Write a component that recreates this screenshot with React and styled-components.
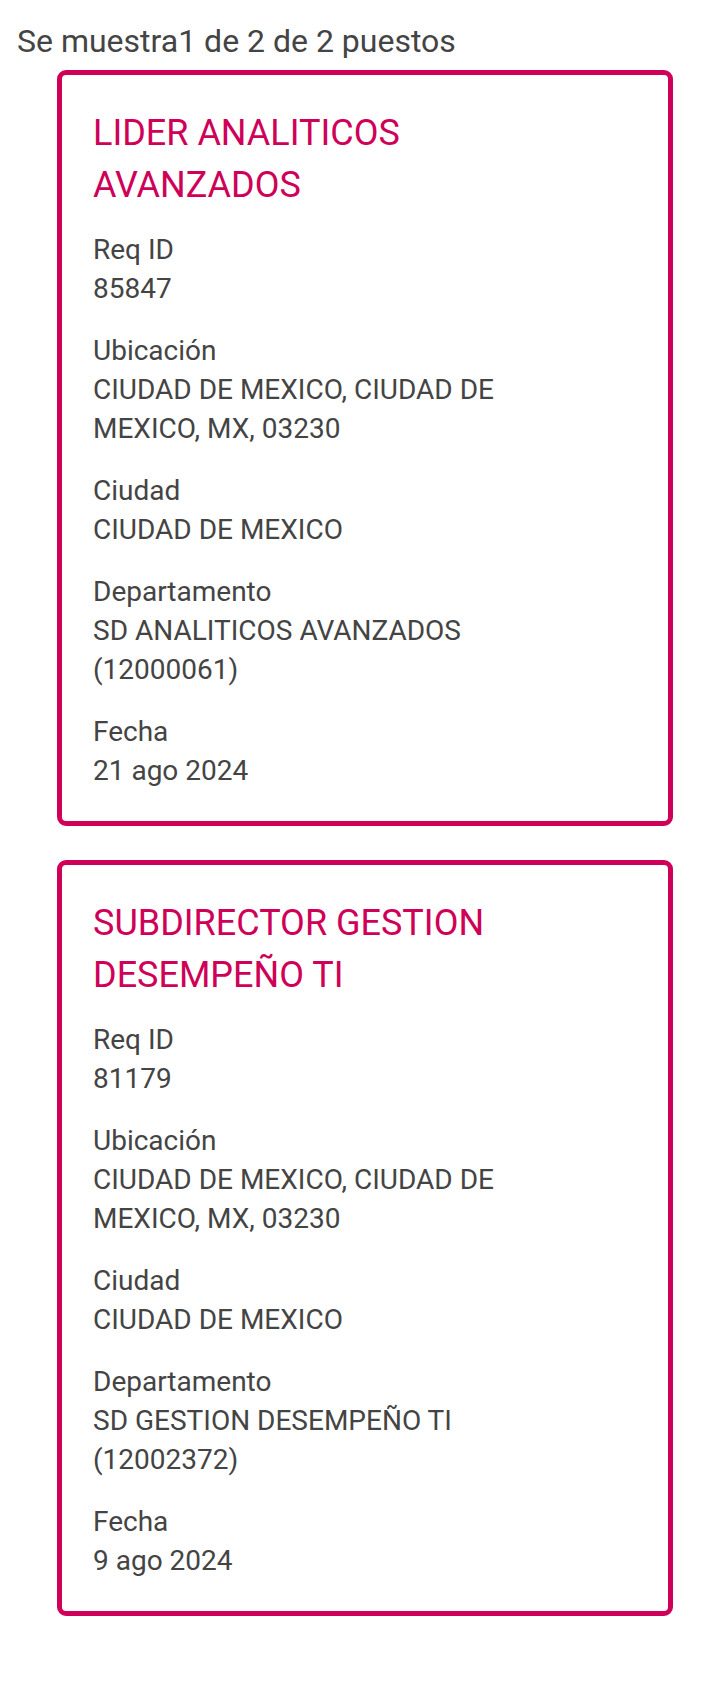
import React from 'react';
import styled, { createGlobalStyle } from 'styled-components';

const GlobalStyle = createGlobalStyle`
   body {
      margin: 0;
      background: #fff;
      font-family: Roboto, "Liberation Sans", Arial, sans-serif;
      color: #444;
   }
`

const Page = styled.div`
   padding: 21px 0 60px;
`

const Summary = styled.div`
   padding-left: 17px;
   font-size: 32px;
   line-height: 40px;
   margin-bottom: 9px;
`

const List = styled.ul`
   list-style: none;
   margin: 0;
   padding: 0 47px 0 57px;
   display: flex;
   flex-direction: column;
   gap: 34px;
`

const Card = styled.li`
   border: 5px solid #cf0058;
   border-radius: 9px;
   padding: 32px 31px 31px;
`

const Content = styled.div`
   max-width: 440px;
`

const Title = styled.a`
   display: block;
   color: #cf0058;
   font-size: 36px;
   line-height: 52px;
   text-decoration: none;
   margin-bottom: 19px;
`

const Field = styled.div`
   font-size: 28px;
   line-height: 39px;

   & + & {
      margin-top: 23px;
   }
`

const Label = styled.div``

const Value = styled.div``

const jobs = [
   {
      title: 'LIDER ANALITICOS AVANZADOS',
      id: '85847',
      location: 'CIUDAD DE MEXICO, CIUDAD DE MEXICO, MX, 03230',
      city: 'CIUDAD DE MEXICO',
      dept: 'SD ANALITICOS AVANZADOS (12000061)',
      date: '21 ago 2024',
   },
   {
      title: 'SUBDIRECTOR GESTION DESEMPEÑO TI',
      id: '81179',
      location: 'CIUDAD DE MEXICO, CIUDAD DE MEXICO, MX, 03230',
      city: 'CIUDAD DE MEXICO',
      dept: 'SD GESTION DESEMPEÑO TI (12002372)',
      date: '9 ago 2024',
   },
]

function JobCard({ job }) {
   const fields = [
      ['Req ID', job.id],
      ['Ubicación', job.location],
      ['Ciudad', job.city],
      ['Departamento', job.dept],
      ['Fecha', job.date],
   ]
   return (
      <Card>
         <Content>
            <Title href="#">{job.title}</Title>
            {fields.map(([label, value]) => (
               <Field key={label}>
                  <Label>{label}</Label>
                  <Value>{value}</Value>
               </Field>
            ))}
         </Content>
      </Card>
   )
}

function App() {
   return (
      <Page>
         <GlobalStyle />
         <Summary>Se muestra1 de 2 de 2 puestos</Summary>
         <List>
            {jobs.map((job) => (
               <JobCard key={job.id} job={job} />
            ))}
         </List>
      </Page>
   )
};

export default App;
